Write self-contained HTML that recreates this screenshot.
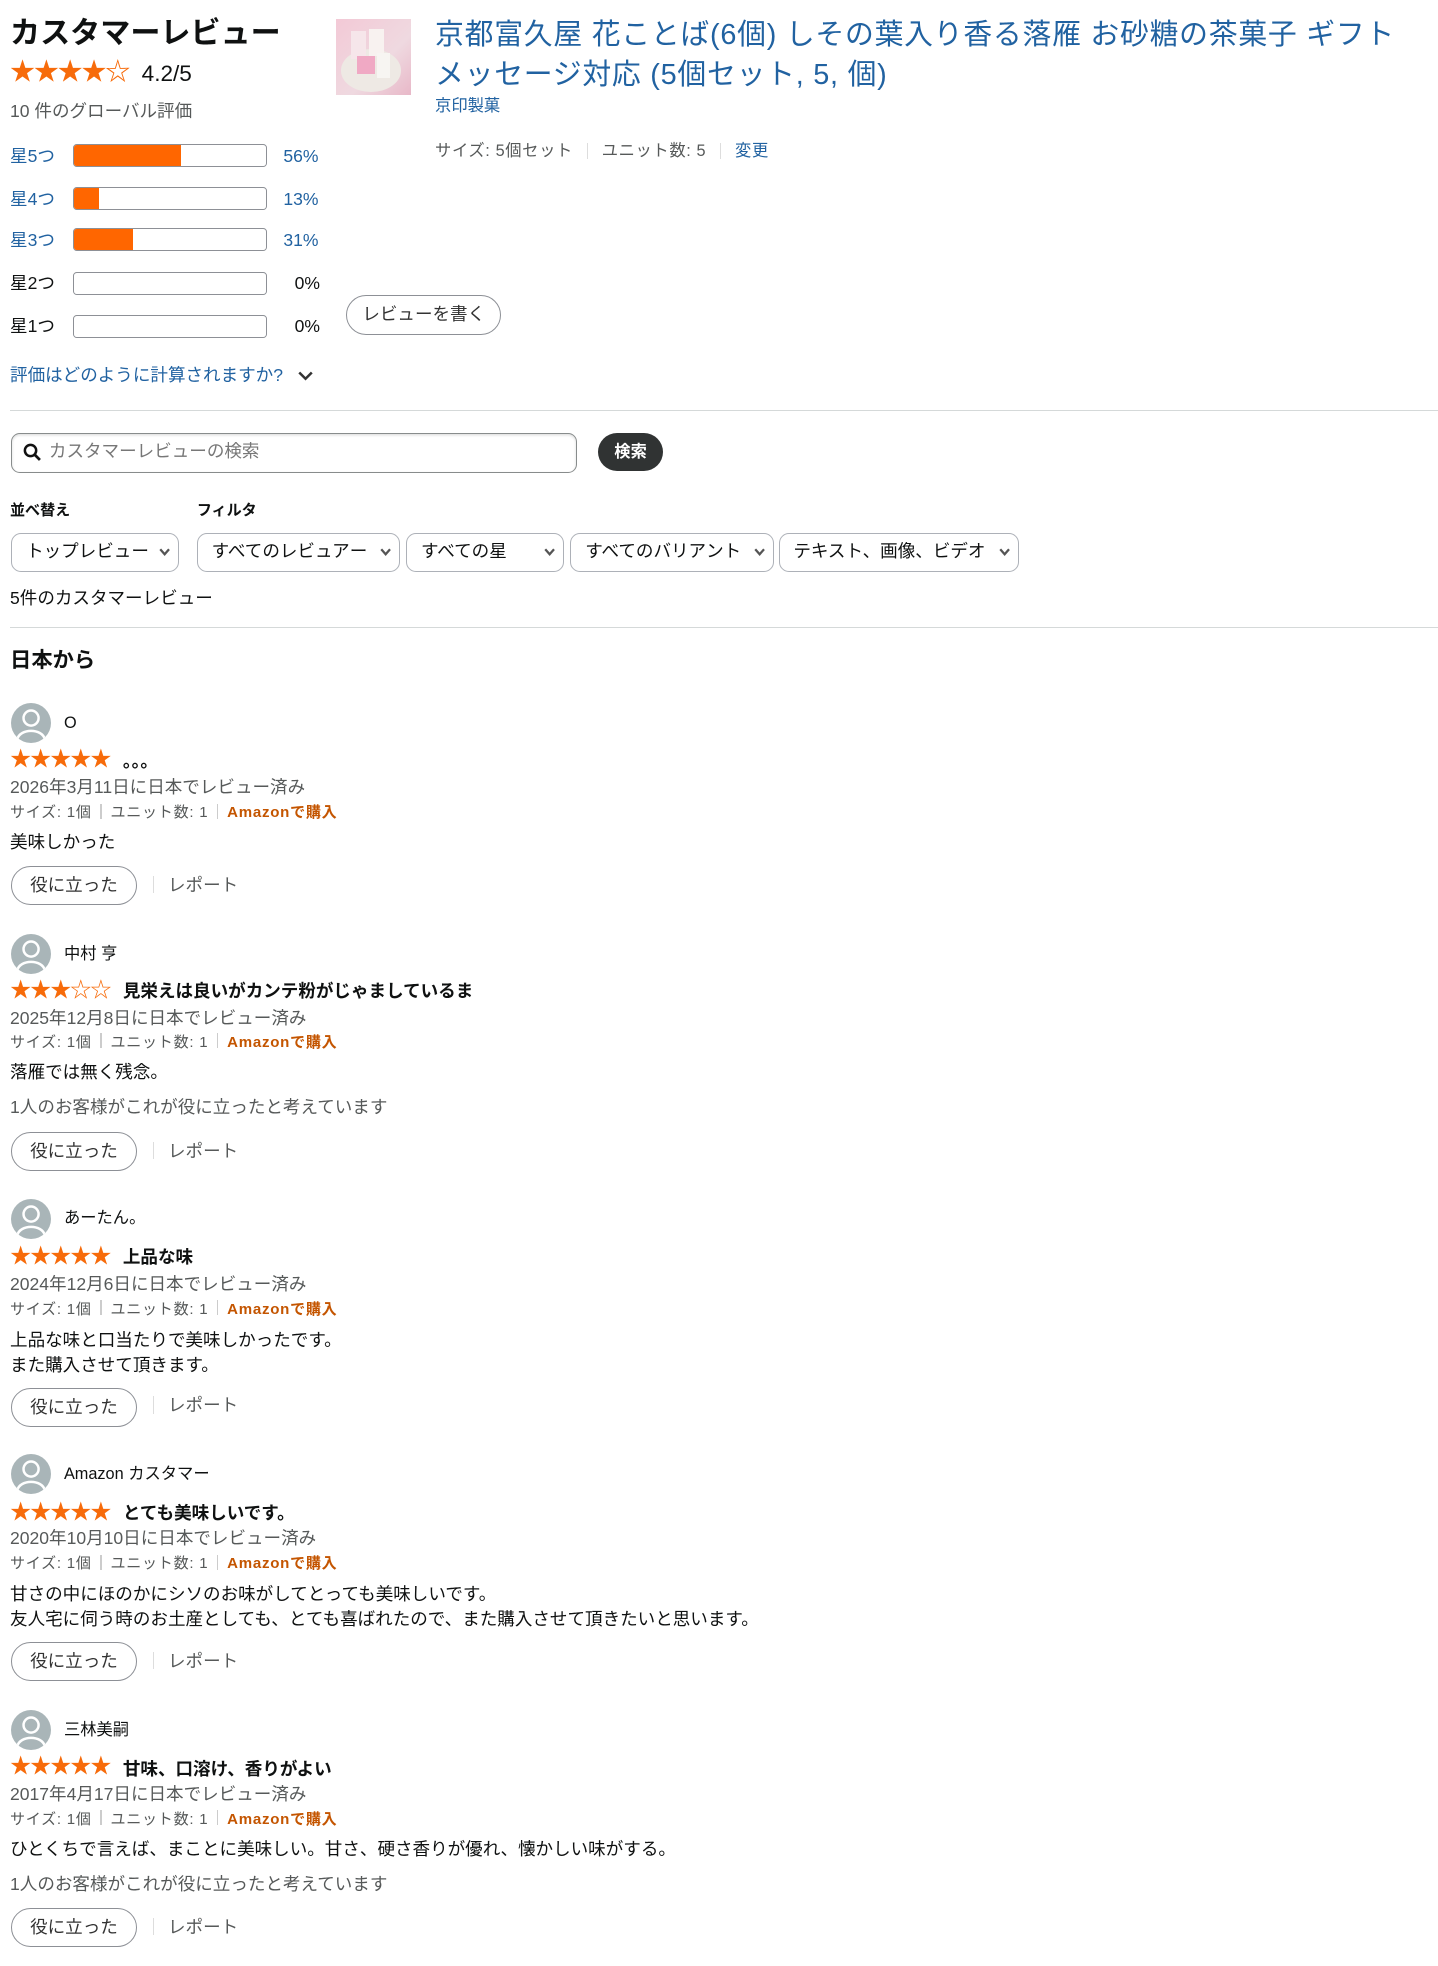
<!DOCTYPE html>
<html><head><meta charset="utf-8">
<style>
html,body{margin:0;padding:0;background:#fff;}
body{width:1438px;height:1966px;overflow:hidden;}
#w{zoom:1.2537;position:relative;width:1147px;height:1568px;font-family:"Liberation Sans","Noto Sans CJK JP",sans-serif;color:#0f1111;font-size:14px;}
.a{position:absolute;white-space:nowrap;line-height:18px;}
.blue{color:#2162a1;}
.gray{color:#565959;}
.st{color:#f76b0a;letter-spacing:-1px;font-size:17px;}
.bar{position:absolute;left:58px;width:153px;height:17px;border:1px solid #8d9096;border-radius:3px;overflow:hidden;background:#fff;}
.bar i{display:block;height:100%;background:#ff6600;}
.pill{position:absolute;border:1px solid #8d9096;border-radius:16px;background:#fff;text-align:center;box-sizing:border-box;}
.dd{position:absolute;top:425px;height:31px;border:1px solid #adb1b8;border-radius:8px;box-sizing:border-box;line-height:28px;padding-left:11px;font-size:14px;}
.dd svg{position:absolute;right:6px;top:11px;}
.av{position:absolute;left:9px;width:32px;height:32px;border-radius:50%;background:#a9b5b8;overflow:hidden;}
.hr{position:absolute;left:8px;right:0;height:1px;background:#d5d9d9;}
.meta{font-size:12px;color:#565959;letter-spacing:0.6px;}
.meta .sep{display:inline-block;width:1px;height:12px;background:#ccc;margin:0 7px;vertical-align:-1px;}
.meta .am{color:#c45500;font-weight:bold;}
</style></head><body><div id="w">

<div class="a" style="left:8px;top:12px;font-size:24px;line-height:30px;font-weight:bold;">カスタマーレビュー</div>
<div class="a st" style="left:8px;top:47px;font-size:20px;line-height:22px;">★★★★☆</div>
<div class="a" style="left:113px;top:48px;font-size:18px;line-height:22px;">4.2/5</div>
<div class="a gray" style="left:8px;top:80px;">10 件のグローバル評価</div>

<div class="a blue" style="left:8px;top:116px;">星5つ</div><div class="bar" style="top:115px"><i style="width:56%"></i></div><div class="a blue" style="left:226px;top:116px;">56%</div>
<div class="a blue" style="left:8px;top:150px;">星4つ</div><div class="bar" style="top:149px"><i style="width:13%"></i></div><div class="a blue" style="left:226px;top:150px;">13%</div>
<div class="a blue" style="left:8px;top:183px;">星3つ</div><div class="bar" style="top:182px"><i style="width:31%"></i></div><div class="a blue" style="left:226px;top:183px;">31%</div>
<div class="a" style="left:8px;top:217px;">星2つ</div><div class="bar" style="top:217px"></div><div class="a" style="left:235px;top:217px;">0%</div>
<div class="a" style="left:8px;top:251px;">星1つ</div><div class="bar" style="top:251px"></div><div class="a" style="left:235px;top:251px;">0%</div>
<div class="a blue" style="left:8px;top:290px;">評価はどのように計算されますか?</div>
<svg style="position:absolute;left:238px;top:295px" width="12" height="9"><path d="M1 2 L6 7 L11 2" fill="none" stroke="#333" stroke-width="2"/></svg>

<div style="position:absolute;left:268px;top:15px;width:60px;height:61px;background:linear-gradient(135deg,#f3c9d6,#efd9e0 60%,#e8b8c8);">
 <div style="position:absolute;left:4px;top:24px;width:48px;height:34px;border-radius:50%;background:#eee9e4;"></div>
 <div style="position:absolute;left:12px;top:10px;width:12px;height:22px;background:#f6e6ea;"></div>
 <div style="position:absolute;left:26px;top:8px;width:12px;height:22px;background:#f8f2f0;"></div>
 <div style="position:absolute;left:17px;top:30px;width:14px;height:14px;background:#f0a9c4;"></div>
 <div style="position:absolute;left:33px;top:27px;width:10px;height:20px;background:#f7f5f2;"></div>
</div>
<div class="a blue" style="left:347px;top:12px;font-size:23px;line-height:32px;letter-spacing:0.6px;">京都富久屋 花ことば(6個) しその葉入り香る落雁 お砂糖の茶菓子 ギフト</div>
<div class="a blue" style="left:347px;top:44px;font-size:23px;line-height:32px;letter-spacing:0.6px;">メッセージ対応 (5個セット, 5, 個)</div>
<div class="a blue" style="left:347px;top:76px;font-size:13px;">京印製菓</div>
<div class="a gray" style="left:347px;top:112px;font-size:13px;letter-spacing:0.5px;">サイズ: 5個セット<span style="display:inline-block;width:1px;height:13px;background:#ddd;margin:0 11px;vertical-align:-2px"></span>ユニット数: 5<span style="display:inline-block;width:1px;height:13px;background:#ddd;margin:0 11px;vertical-align:-2px"></span><span class="blue">変更</span></div>
<div class="pill" style="left:276px;top:235px;width:124px;height:32px;line-height:30px;color:#333;">レビューを書く</div>

<div class="hr" style="top:327px"></div>
<div style="position:absolute;left:9px;top:345px;width:451px;height:32px;border:1px solid #888c8c;border-radius:7px;box-sizing:border-box;box-shadow:inset 0 1px 2px rgba(15,17,17,.15);"></div>
<svg style="position:absolute;left:18px;top:353px" width="15" height="15"><circle cx="6" cy="6" r="4.5" fill="none" stroke="#111" stroke-width="2"/><path d="M9.5 9.5 L13.5 13.5" stroke="#111" stroke-width="2.2"/></svg>
<div class="a" style="left:39px;top:351px;color:#777;">カスタマーレビューの検索</div>
<div style="position:absolute;left:477px;top:345px;width:52px;height:31px;border-radius:16px;background:#303333;color:#fff;font-weight:bold;font-size:13px;text-align:center;line-height:31px;">検索</div>

<div class="a" style="left:8px;top:399px;font-size:12px;font-weight:bold;">並べ替え</div>
<div class="a" style="left:157px;top:399px;font-size:12px;font-weight:bold;">フィルタ</div>
<div class="dd" style="left:9px;width:134px;">トップレビュー<svg width="9" height="7"><path d="M1 1 L4.5 5 L8 1" fill="none" stroke="#555" stroke-width="1.8"/></svg></div>
<div class="dd" style="left:157px;width:162px;">すべてのレビュアー<svg width="9" height="7"><path d="M1 1 L4.5 5 L8 1" fill="none" stroke="#555" stroke-width="1.8"/></svg></div>
<div class="dd" style="left:324px;width:126px;">すべての星<svg width="9" height="7"><path d="M1 1 L4.5 5 L8 1" fill="none" stroke="#555" stroke-width="1.8"/></svg></div>
<div class="dd" style="left:455px;width:162px;">すべてのバリアント<svg width="9" height="7"><path d="M1 1 L4.5 5 L8 1" fill="none" stroke="#555" stroke-width="1.8"/></svg></div>
<div class="dd" style="left:621px;width:192px;">テキスト、画像、ビデオ<svg width="9" height="7"><path d="M1 1 L4.5 5 L8 1" fill="none" stroke="#555" stroke-width="1.8"/></svg></div>
<div class="a" style="left:8px;top:468px;">5件のカスタマーレビュー</div>
<div class="hr" style="top:500px"></div>
<div class="a" style="left:8px;top:516px;font-size:17px;line-height:22px;font-weight:bold;">日本から</div>

<!-- Review 1 -->
<div class="av" style="top:561px"><svg width="32" height="32"><circle cx="16" cy="12" r="6" fill="none" stroke="#fff" stroke-width="2"/><path d="M5 29 C7 20 25 20 27 29" fill="none" stroke="#fff" stroke-width="2"/></svg></div>
<div class="a" style="left:51px;top:568px;font-size:13px;">O</div>
<div class="a st" style="left:8px;top:597px;">★★★★★</div>
<div class="a" style="left:98px;top:598px;font-weight:bold;">。。。</div>
<div class="a gray" style="left:8px;top:619px;">2026年3月11日に日本でレビュー済み</div>
<div class="a meta" style="left:8px;top:640px;">サイズ: 1個<span class="sep"></span>ユニット数: 1<span class="sep"></span><span class="am">Amazonで購入</span></div>
<div class="a" style="left:8px;top:663px;">美味しかった</div>
<div class="pill" style="left:9px;top:691px;width:100px;height:31px;line-height:29px;color:#333;">役に立った</div>
<div class="a gray" style="left:122px;top:697px;"><span style="display:inline-block;width:1px;height:14px;background:#ddd;margin-right:11px;vertical-align:-2px"></span>レポート</div>

<!-- Review 2 -->
<div class="av" style="top:745px"><svg width="32" height="32"><circle cx="16" cy="12" r="6" fill="none" stroke="#fff" stroke-width="2"/><path d="M5 29 C7 20 25 20 27 29" fill="none" stroke="#fff" stroke-width="2"/></svg></div>
<div class="a" style="left:51px;top:752px;font-size:13px;">中村 亨</div>
<div class="a st" style="left:8px;top:781px;">★★★☆☆</div>
<div class="a" style="left:98px;top:782px;font-weight:bold;">見栄えは良いがカンテ粉がじゃましているま</div>
<div class="a gray" style="left:8px;top:803px;">2025年12月8日に日本でレビュー済み</div>
<div class="a meta" style="left:8px;top:823px;">サイズ: 1個<span class="sep"></span>ユニット数: 1<span class="sep"></span><span class="am">Amazonで購入</span></div>
<div class="a" style="left:8px;top:846px;">落雁では無く残念。</div>
<div class="a gray" style="left:8px;top:874px;">1人のお客様がこれが役に立ったと考えています</div>
<div class="pill" style="left:9px;top:903px;width:100px;height:31px;line-height:29px;color:#333;">役に立った</div>
<div class="a gray" style="left:122px;top:909px;"><span style="display:inline-block;width:1px;height:14px;background:#ddd;margin-right:11px;vertical-align:-2px"></span>レポート</div>

<!-- Review 3 -->
<div class="av" style="top:956px"><svg width="32" height="32"><circle cx="16" cy="12" r="6" fill="none" stroke="#fff" stroke-width="2"/><path d="M5 29 C7 20 25 20 27 29" fill="none" stroke="#fff" stroke-width="2"/></svg></div>
<div class="a" style="left:51px;top:963px;font-size:13px;">あーたん。</div>
<div class="a st" style="left:8px;top:993px;">★★★★★</div>
<div class="a" style="left:98px;top:994px;font-weight:bold;">上品な味</div>
<div class="a gray" style="left:8px;top:1015px;">2024年12月6日に日本でレビュー済み</div>
<div class="a meta" style="left:8px;top:1036px;">サイズ: 1個<span class="sep"></span>ユニット数: 1<span class="sep"></span><span class="am">Amazonで購入</span></div>
<div class="a" style="left:8px;top:1059px;line-height:20px;">上品な味と口当たりで美味しかったです。<br>また購入させて頂きます。</div>
<div class="pill" style="left:9px;top:1107px;width:100px;height:31px;line-height:29px;color:#333;">役に立った</div>
<div class="a gray" style="left:122px;top:1112px;"><span style="display:inline-block;width:1px;height:14px;background:#ddd;margin-right:11px;vertical-align:-2px"></span>レポート</div>

<!-- Review 4 -->
<div class="av" style="top:1160px"><svg width="32" height="32"><circle cx="16" cy="12" r="6" fill="none" stroke="#fff" stroke-width="2"/><path d="M5 29 C7 20 25 20 27 29" fill="none" stroke="#fff" stroke-width="2"/></svg></div>
<div class="a" style="left:51px;top:1167px;font-size:13px;">Amazon カスタマー</div>
<div class="a st" style="left:8px;top:1197px;">★★★★★</div>
<div class="a" style="left:98px;top:1198px;font-weight:bold;">とても美味しいです。</div>
<div class="a gray" style="left:8px;top:1218px;">2020年10月10日に日本でレビュー済み</div>
<div class="a meta" style="left:8px;top:1239px;">サイズ: 1個<span class="sep"></span>ユニット数: 1<span class="sep"></span><span class="am">Amazonで購入</span></div>
<div class="a" style="left:8px;top:1262px;line-height:20px;">甘さの中にほのかにシソのお味がしてとっても美味しいです。<br>友人宅に伺う時のお土産としても、とても喜ばれたので、また購入させて頂きたいと思います。</div>
<div class="pill" style="left:9px;top:1310px;width:100px;height:31px;line-height:29px;color:#333;">役に立った</div>
<div class="a gray" style="left:122px;top:1316px;"><span style="display:inline-block;width:1px;height:14px;background:#ddd;margin-right:11px;vertical-align:-2px"></span>レポート</div>

<!-- Review 5 -->
<div class="av" style="top:1364px"><svg width="32" height="32"><circle cx="16" cy="12" r="6" fill="none" stroke="#fff" stroke-width="2"/><path d="M5 29 C7 20 25 20 27 29" fill="none" stroke="#fff" stroke-width="2"/></svg></div>
<div class="a" style="left:51px;top:1371px;font-size:13px;">三林美嗣</div>
<div class="a st" style="left:8px;top:1400px;">★★★★★</div>
<div class="a" style="left:98px;top:1402px;font-weight:bold;">甘味、口溶け、香りがよい</div>
<div class="a gray" style="left:8px;top:1422px;">2017年4月17日に日本でレビュー済み</div>
<div class="a meta" style="left:8px;top:1443px;">サイズ: 1個<span class="sep"></span>ユニット数: 1<span class="sep"></span><span class="am">Amazonで購入</span></div>
<div class="a" style="left:8px;top:1466px;">ひとくちで言えば、まことに美味しい。甘さ、硬さ香りが優れ、懐かしい味がする。</div>
<div class="a gray" style="left:8px;top:1494px;">1人のお客様がこれが役に立ったと考えています</div>
<div class="pill" style="left:9px;top:1522px;width:100px;height:31px;line-height:29px;color:#333;">役に立った</div>
<div class="a gray" style="left:122px;top:1528px;"><span style="display:inline-block;width:1px;height:14px;background:#ddd;margin-right:11px;vertical-align:-2px"></span>レポート</div>

</div></body></html>
